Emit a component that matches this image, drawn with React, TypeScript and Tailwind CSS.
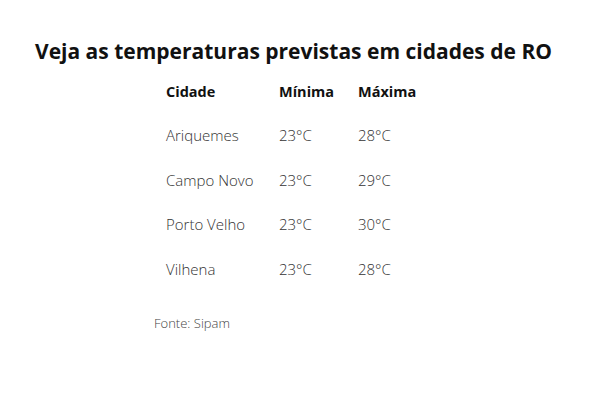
const rows = [
  { city: "Ariquemes", min: "23°C", max: "28°C" },
  { city: "Campo Novo", min: "23°C", max: "29°C" },
  { city: "Porto Velho", min: "23°C", max: "30°C" },
  { city: "Vilhena", min: "23°C", max: "28°C" },
];

export default function App() {
  return (
    <div className="h-[400px] w-[600px] bg-white font-['Open_Sans',sans-serif] text-[#111]">
      <h1 className="pl-[35px] pt-[36px] text-[21px] font-bold leading-[30px]">
        Veja as temperaturas previstas em cidades de RO
      </h1>
      <table className="ml-[155px] mt-[4px] border-collapse">
        <thead>
          <tr className="h-[43px] text-[14.5px] font-bold">
            <th className="w-[124px] pl-[11px] text-left">Cidade</th>
            <th className="w-[79px] text-left">Mínima</th>
            <th className="w-[80px] text-left">Máxima</th>
          </tr>
        </thead>
        <tbody className="text-[15px] font-light text-[#333]">
          {rows.map((r) => (
            <tr key={r.city} className="h-[44.5px]">
              <td className="pl-[11px]">{r.city}</td>
              <td>{r.min}</td>
              <td>{r.max}</td>
            </tr>
          ))}
        </tbody>
      </table>
      <p className="ml-[154px] mt-[23px] text-[13px] font-light text-[#444]">Fonte: Sipam</p>
    </div>
  );
}
